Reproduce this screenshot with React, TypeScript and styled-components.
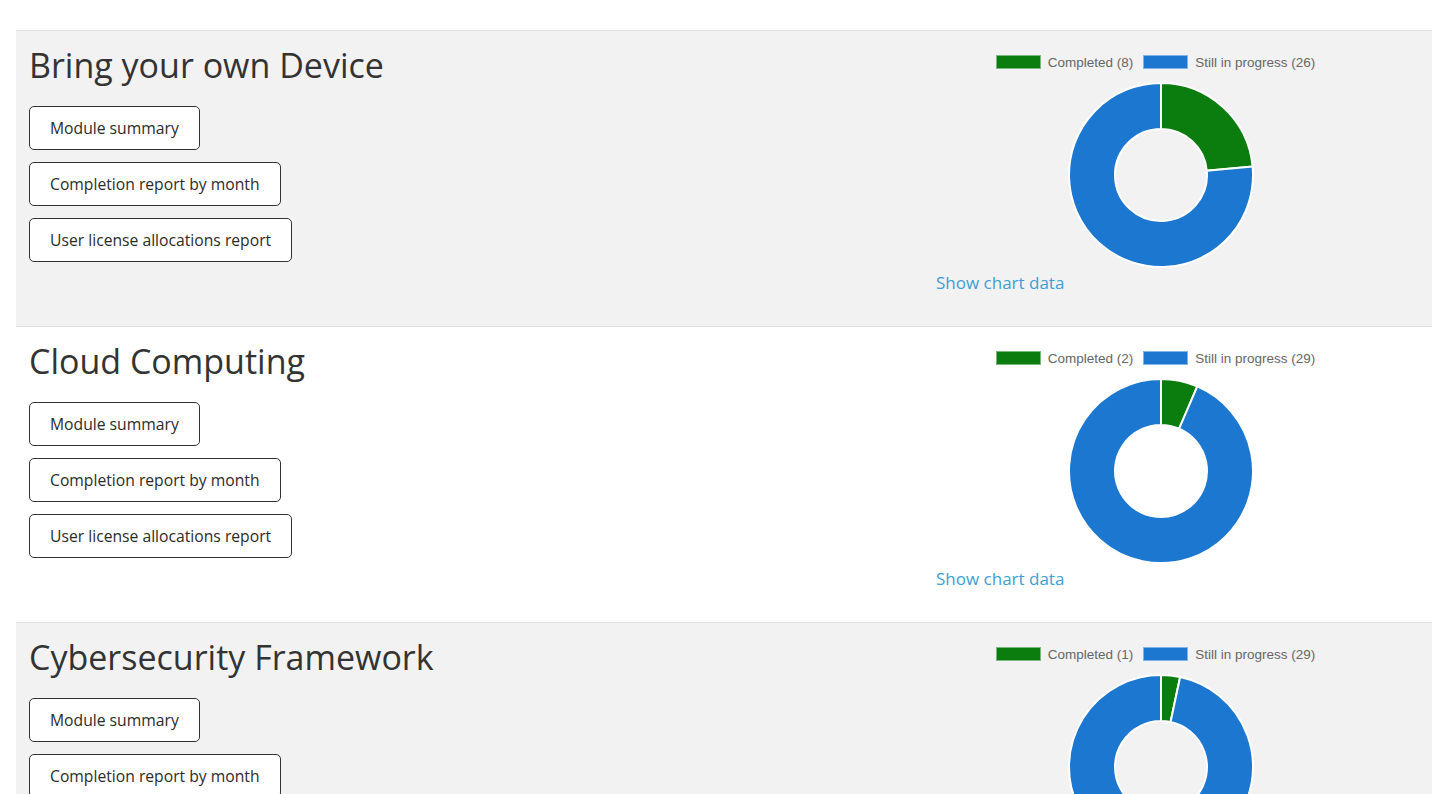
import React from "react";
import styled, { createGlobalStyle } from "styled-components";

const GlobalStyle = createGlobalStyle`
  html, body { margin: 0; padding: 0; background: #ffffff; }
  body { font-family: "Open Sans", "Noto Sans", sans-serif; color: #333333; }
  * { box-sizing: border-box; }
`;

const Page = styled.div`
  padding: 30px 18px 0 16px;
`;

const Section = styled.section<{ $shaded: boolean }>`
  display: flex;
  min-height: 296px;
  border-top: 1px solid #e1e1e1;
  background: ${(p) => (p.$shaded ? "#f2f2f2" : "#ffffff")};
`;

const LeftCol = styled.div`
  flex: 1;
  padding: 13px 0 0 13px;
`;

const Title = styled.h2`
  margin: 0 0 20px;
  font-family: "Open Sans", "Noto Sans", sans-serif;
  font-weight: 400;
  font-size: 34px;
  line-height: 42px;
  color: #333333;
`;

const ButtonList = styled.div`
  display: flex;
  flex-direction: column;
  align-items: flex-start;
  gap: 12px;
`;

const ReportButton = styled.button`
  height: 44px;
  padding: 0 20px;
  border: 1px solid #333333;
  border-radius: 5px;
  background: #ffffff;
  color: #2b2b2b;
  font-family: "Open Sans", "Noto Sans", sans-serif;
  font-size: 15.7px;
  line-height: 22px;
  cursor: pointer;
`;

const ChartCol = styled.div`
  width: 441px;
  margin-right: 56px;
  padding-top: 24px;
  display: flex;
  flex-direction: column;
`;

const Legend = styled.div`
  display: flex;
  justify-content: center;
  align-items: center;
  height: 14px;
  font-family: "Liberation Sans", Arial, sans-serif;
  font-size: 13.5px;
  color: #666666;
`;

const LegendItem = styled.div`
  display: flex;
  align-items: center;
  gap: 7px;
  margin: 0 5px;
`;

const LegendBox = styled.span<{ $color: string }>`
  width: 45px;
  height: 14px;
  background: ${(p) => p.$color};
  border: 1px solid rgba(255, 255, 255, 0.45);
`;

const DonutWrap = styled.div`
  display: flex;
  justify-content: center;
  padding-left: 10px;
  margin-top: 12px;
`;

const ChartLink = styled.a`
  margin: 2px 0 0 1px;
  font-family: "Open Sans", "Noto Sans", sans-serif;
  font-size: 17px;
  line-height: 24px;
  color: #3a9fd9;
  text-decoration: none;
  cursor: pointer;
`;

const GREEN = "#0b7d0e";
const BLUE = "#1b77d0";

function arcPath(cx: number, cy: number, r0: number, r1: number, a0: number, a1: number) {
  const pt = (r: number, a: number) => [cx + r * Math.sin(a), cy - r * Math.cos(a)];
  const large = a1 - a0 > Math.PI ? 1 : 0;
  const [x0, y0] = pt(r1, a0);
  const [x1, y1] = pt(r1, a1);
  const [x2, y2] = pt(r0, a1);
  const [x3, y3] = pt(r0, a0);
  return `M${x0} ${y0} A${r1} ${r1} 0 ${large} 1 ${x1} ${y1} L${x2} ${y2} A${r0} ${r0} 0 ${large} 0 ${x3} ${y3} Z`;
}

function Donut({ done, pending }: { done: number; pending: number }) {
  const total = done + pending;
  const split = (done / total) * Math.PI * 2;
  const c = 94;
  return (
    <svg width="188" height="188" viewBox="0 0 188 188">
      <path d={arcPath(c, c, 46, 92, 0, split)} fill={GREEN} stroke="#fff" strokeWidth="2" />
      <path d={arcPath(c, c, 46, 92, split, Math.PI * 2 - 0.0001)} fill={BLUE} stroke="#fff" strokeWidth="2" />
    </svg>
  );
}

const modules = [
  { name: "Bring your own Device", done: 8, pending: 26 },
  { name: "Cloud Computing", done: 2, pending: 29 },
  { name: "Cybersecurity Framework", done: 1, pending: 29 },
];

const reports = ["Module summary", "Completion report by month", "User license allocations report"];

export default function App() {
  return (
    <>
      <GlobalStyle />
      <Page>
        {modules.map((m, i) => (
          <Section key={m.name} $shaded={i % 2 === 0}>
            <LeftCol>
              <Title>{m.name}</Title>
              <ButtonList>
                {reports.map((r) => (
                  <ReportButton key={r}>{r}</ReportButton>
                ))}
              </ButtonList>
            </LeftCol>
            <ChartCol>
              <Legend>
                <LegendItem>
                  <LegendBox $color={GREEN} />
                  <span>Completed ({m.done})</span>
                </LegendItem>
                <LegendItem>
                  <LegendBox $color={BLUE} />
                  <span>Still in progress ({m.pending})</span>
                </LegendItem>
              </Legend>
              <DonutWrap>
                <Donut done={m.done} pending={m.pending} />
              </DonutWrap>
              <ChartLink>Show chart data</ChartLink>
            </ChartCol>
          </Section>
        ))}
      </Page>
    </>
  );
}
